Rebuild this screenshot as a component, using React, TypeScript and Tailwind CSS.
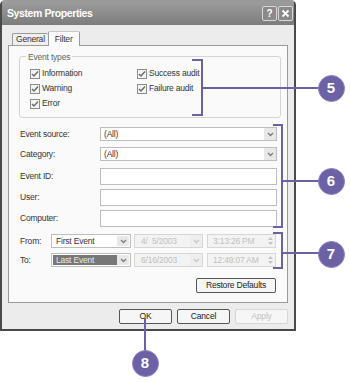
import React from "react";

const F = { fontFamily: '"Liberation Sans", Arial, sans-serif' };

function Check({ label }: { label: string }) {
  return (
    <div className="flex items-center gap-[2px] h-[15px]">
      <div className="w-[10px] h-[10px] border border-[#8c8c8c] bg-[#f4f4f4] flex items-center justify-center">
        <svg width="8" height="8" viewBox="0 0 8 8">
          <path d="M1 4 L3 6 L7 1.5" stroke="#6a6a6a" strokeWidth="1.4" fill="none" />
        </svg>
      </div>
      <span className="text-[8.5px] tracking-[-0.2px] text-[#333] whitespace-nowrap">{label}</span>
    </div>
  );
}

function Arrow({ disabled }: { disabled?: boolean }) {
  return (
    <div className={`w-[12px] h-full flex items-center justify-center ${disabled ? "bg-[#eeeeee]" : "bg-[#e8e8e8]"}`}>
      <svg width="7" height="5" viewBox="0 0 7 5">
        <path d="M1 1 L3.5 3.5 L6 1" stroke={disabled ? "#c8c8c8" : "#7a7a7a"} strokeWidth="1.3" fill="none" />
      </svg>
    </div>
  );
}

function Spin() {
  return (
    <div className="w-[9px] h-full flex flex-col items-center justify-center gap-[2px]">
      <svg width="5" height="3" viewBox="0 0 5 3"><path d="M0 3 L2.5 0 L5 3Z" fill="#c4c4c4" /></svg>
      <svg width="5" height="3" viewBox="0 0 5 3"><path d="M0 0 L2.5 3 L5 0Z" fill="#c4c4c4" /></svg>
    </div>
  );
}

function Row({ label, children }: { label: string; children: React.ReactNode }) {
  return (
    <div className="flex items-center">
      <span className="w-[80px] text-[8.5px] tracking-[-0.2px] text-[#333] whitespace-nowrap">{label}</span>
      {children}
    </div>
  );
}

function Btn({ label, disabled, w, focus }: { label: string; disabled?: boolean; w: string; focus?: boolean }) {
  return (
    <div className={`${w} h-[15px] rounded-[2px] ${focus ? "border-[1.5px]" : "border"} ${disabled ? "border-[#d6d6d6] text-[#c0c0c0]" : "border-[#555] text-[#222]"} bg-[#f6f6f6] flex items-center justify-center text-[8.5px] tracking-[-0.2px] whitespace-nowrap`}>
      {label}
    </div>
  );
}

export default function App() {
  const purple = "#6c61a4";
  const txt = "text-[8.5px] tracking-[-0.2px] whitespace-nowrap";
  return (
    <div className="relative w-[350px] h-[382px] bg-white overflow-hidden" style={F}>
      <div className="w-[296px] h-[331px] border-[2px] border-[#4a4a4a] border-t-[#9a9a9a] rounded-t-[5px] bg-[#ececec] flex flex-col">
        {/* title bar */}
        <div className="h-[23px] bg-gradient-to-b from-[#9c9c9c] to-[#7c7c7c] flex items-center justify-between pl-[5px] pr-[1px]">
          <span className="text-white font-bold text-[10.5px] tracking-[-0.4px]">System Properties</span>
          <div className="flex gap-[1px]">
            <div className="w-[15px] h-[15px] rounded-[2px] border border-[#d8d8d8] bg-[#8a8a8a] flex items-center justify-center text-white font-bold text-[10px]">?</div>
            <div className="w-[15px] h-[15px] rounded-[2px] border border-[#d8d8d8] bg-[#8a8a8a] flex items-center justify-center">
              <svg width="9" height="9" viewBox="0 0 9 9"><path d="M1.5 1.5 L7.5 7.5 M7.5 1.5 L1.5 7.5" stroke="white" strokeWidth="1.8" /></svg>
            </div>
          </div>
        </div>
        {/* body */}
        <div className="flex-1 px-[6px] pt-[6px] flex flex-col">
          <div className="flex items-end h-[14px] pl-[4px]">
            <div className={`h-[12px] px-[3px] border border-b-0 border-r-0 border-[#9a9a9a] bg-[#f0f0f0] ${txt} text-[#333] flex items-center rounded-t-[2px]`}>General</div>
            <div className={`h-[15px] px-[6px] border border-b-0 border-[#9a9a9a] border-t-[#c8c8c8] bg-[#fbfbfb] ${txt} text-[#333] flex items-start pt-[1px] rounded-t-[2px] relative top-[1px]`}>Filter</div>
          </div>
          <div className="h-[258px] border border-[#9a9a9a] bg-[#fafafa] px-[10px] pt-[10px] flex flex-col">
            {/* Event types */}
            <div className="relative h-[62px] w-[262px] border border-[#d4d4d4] rounded-[3px] px-[10px] pt-[9px]">
              <span className={`absolute -top-[6px] left-[6px] px-[2px] bg-[#fafafa] ${txt} text-[#666]`}>Event types</span>
              <div className="flex">
                <div className="w-[107px] flex flex-col">
                  <Check label="Information" />
                  <Check label="Warning" />
                  <Check label="Error" />
                </div>
                <div className="flex flex-col">
                  <Check label="Success audit" />
                  <Check label="Failure audit" />
                </div>
              </div>
            </div>
            <div className="mt-[9px] flex flex-col gap-[6px] ml-[1px]">
              <Row label="Event source:">
                <div className="w-[177px] h-[14px] border border-[#bdbdbd] bg-white flex items-center">
                  <span className={`flex-1 pl-[3px] ${txt} text-[#333]`}>(All)</span>
                  <Arrow />
                </div>
              </Row>
              <Row label="Category:">
                <div className="w-[177px] h-[14px] border border-[#bdbdbd] bg-white flex items-center">
                  <span className={`flex-1 pl-[3px] ${txt} text-[#333]`}>(All)</span>
                  <Arrow />
                </div>
              </Row>
              <div className="flex flex-col gap-[4px] mt-[1px]">
                <Row label="Event ID:"><div className="w-[177px] h-[17px] border border-[#bdbdbd] bg-white" /></Row>
                <Row label="User:"><div className="w-[177px] h-[17px] border border-[#bdbdbd] bg-white" /></Row>
                <Row label="Computer:"><div className="w-[177px] h-[17px] border border-[#bdbdbd] bg-white" /></Row>
              </div>
              <div className="flex flex-col gap-[5px] mt-[1px]">
                {[
                  { l: "From:", v: "First Event", d: "4/  5/2003", t: "3:13:26 PM", sel: false },
                  { l: "To:", v: "Last Event", d: "6/16/2003", t: "12:49:07 AM", sel: true },
                ].map((r) => (
                  <div key={r.l} className="flex items-center h-[14px]">
                    <span className={`w-[31px] ${txt} text-[#333]`}>{r.l}</span>
                    <div className="w-[80px] h-[14px] border border-[#bdbdbd] bg-white flex items-center p-[1px]">
                      <span className={`flex-1 h-full pl-[3px] ${txt} flex items-center ${r.sel ? "bg-[#777777] text-[#e8e8e8]" : "text-[#333]"}`}>{r.v}</span>
                      <Arrow />
                    </div>
                    <div className="ml-[3px] w-[69px] h-[14px] border border-[#d6d6d6] bg-[#f3f3f3] flex items-center">
                      <span className={`flex-1 pl-[6px] ${txt} text-[#c0c0c0] whitespace-pre`}>{r.d}</span>
                      <Arrow disabled />
                    </div>
                    <div className="ml-[4px] w-[69px] h-[14px] border border-[#d6d6d6] bg-[#f3f3f3] flex items-center">
                      <span className={`flex-1 pl-[5px] ${txt} text-[#c0c0c0]`}>{r.t}</span>
                      <Spin />
                    </div>
                  </div>
                ))}
              </div>
              <div className="flex justify-end mt-[5px] pr-[1px]">
                <Btn label="Restore Defaults" w="w-[80px]" />
              </div>
            </div>
          </div>
          <div className="flex justify-end gap-[5px] mt-[6px] pr-[0px]">
            <Btn label="OK" w="w-[53px]" focus />
            <Btn label="Cancel" w="w-[53px]" />
            <Btn label="Apply" w="w-[53px]" disabled />
          </div>
        </div>
      </div>

      {/* callouts */}
      <svg className="absolute left-0 top-0" width="350" height="382">
        <g stroke={purple} strokeWidth="2" fill="none">
          <path d="M192 60 H202 V115 H192" />
          <path d="M202 88 H320" />
          <path d="M273 125 H282 V227 H273" />
          <path d="M282 181 H320" />
          <path d="M273 233 H282 V268 H273" />
          <path d="M282 253 H320" />
          <path d="M145 318 V352" />
        </g>
      </svg>
      {[
        { n: "5", x: 331, y: 88 },
        { n: "6", x: 331, y: 181 },
        { n: "7", x: 331, y: 254 },
        { n: "8", x: 145, y: 363 },
      ].map((c) => (
        <div
          key={c.n}
          className="absolute w-[27px] h-[27px] rounded-full bg-[#6c61a4] border border-[#8a82bb] flex items-center justify-center text-white font-bold text-[15px]"
          style={{ left: c.x - 13.5, top: c.y - 13.5 }}
        >
          {c.n}
        </div>
      ))}
    </div>
  );
}
